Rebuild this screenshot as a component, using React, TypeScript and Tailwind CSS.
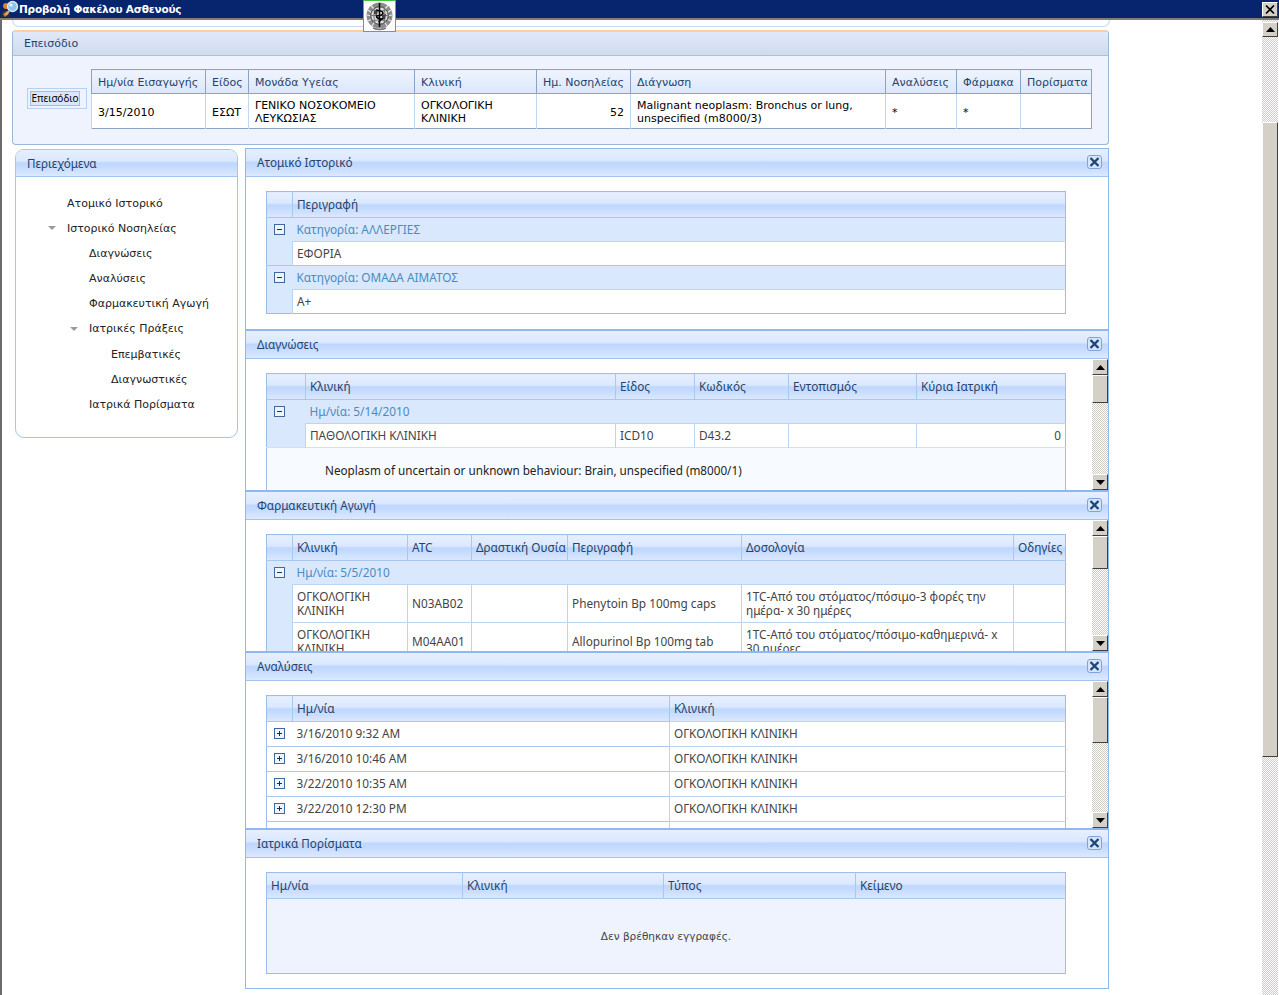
import { FC, ReactNode } from "react";

const HEADER_BG =
  "bg-[linear-gradient(#e6efff_0%,#dbe8fe_42%,#bfd7ff_50%,#c6dbff_66%,#dce9ff_100%)]";
const CHECKER =
  "bg-[repeating-conic-gradient(#cfccc5_0_25%,#ffffff_0_50%)] bg-[length:2px_2px]";
const BTN =
  "bg-[#d4d0c8] border border-t-white border-l-white border-r-[#404040] border-b-[#404040]";
const TH =
  "font-normal text-left align-middle px-1 pb-[2px] whitespace-nowrap text-[#24436b] border-l border-[#a9c8f0] first:border-l-0 " +
  HEADER_BG;
const TD = "align-middle px-1 pb-[2px] border-t border-l border-[#bcd4f2] bg-white";

const Arrow: FC<{ down?: boolean }> = ({ down }) => (
  <svg width="9" height="5" viewBox="0 0 9 5" className={down ? "rotate-180" : ""}>
    <path d="M4.5 0 L9 5 H0 Z" fill="#000" />
  </svg>
);

const Scrollbar: FC<{ thumb: string }> = ({ thumb }) => (
  <div className={`w-[16px] h-full flex flex-col shrink-0 ${CHECKER}`}>
    <div className={`${BTN} h-[16px] flex items-center justify-center shrink-0`}>
      <Arrow />
    </div>
    <div className={`${BTN} ${thumb} shrink-0`} />
    <div className="flex-1" />
    <div className={`${BTN} h-[16px] flex items-center justify-center shrink-0`}>
      <Arrow down />
    </div>
  </div>
);

const CloseIcon: FC = () => (
  <div className="w-[15px] h-[14px] -mt-px rounded-[3px] border border-[#7fa2dc] bg-[#d6e5fc] flex items-center justify-center">
    <svg width="11" height="10" viewBox="0 0 11 10">
      <path d="M1.5 1 L9.5 9 M9.5 1 L1.5 9" stroke="#1d4677" strokeWidth="2.4" />
    </svg>
  </div>
);

const Expander: FC<{ open?: boolean }> = ({ open }) => (
  <div className="w-[11px] h-[11px] ml-[7px] -mt-px border border-[#41689c] bg-[#eef4fe] flex items-center justify-center relative">
    <div className="w-[5px] h-px bg-[#1c2f4a]" />
    {!open && <div className="absolute w-px h-[5px] bg-[#1c2f4a]" />}
  </div>
);

const Panel: FC<{
  title: string;
  height: string;
  top?: string;
  thumb?: string;
  children: ReactNode;
}> = ({ title, height, top = "border-t-2", thumb, children }) => (
  <section className={`${height} ${top} border-x border-[#8fb8ef] bg-white flex flex-col overflow-hidden shrink-0`}>
    <div className={`h-[28px] shrink-0 border-b border-[#a3c2ee] flex items-center justify-between pl-[11px] pr-[6px] text-[11.7px] text-[#24436b] ${HEADER_BG}`}>
      <span>{title}</span>
      <CloseIcon />
    </div>
    <div className="flex-1 flex min-h-0">
      <div className="flex-1 min-w-0 overflow-hidden pl-[20px] pt-[14px]">{children}</div>
      {thumb && <Scrollbar thumb={thumb} />}
    </div>
  </section>
);

const Grid: FC<{ cols: [string, string][]; children: ReactNode }> = ({ cols, children }) => (
  <table className="w-[799px] table-fixed border-collapse border border-[#9dbdea] text-[11.8px] leading-[14px] text-[#444]">
    <colgroup>
      {cols.map(([, w], i) => (
        <col key={i} className={w} />
      ))}
    </colgroup>
    <thead>
      <tr className="h-[26px]">
        {cols.map(([label], i) => (
          <th key={i} className={TH}>
            {label}
          </th>
        ))}
      </tr>
    </thead>
    <tbody>{children}</tbody>
  </table>
);

const GroupRow: FC<{ label: string; span: number }> = ({ label, span }) => (
  <tr className="h-[24px] bg-[#dae8fd]">
    <td className="border-t border-[#a9c8f0]">
      <Expander open />
    </td>
    <td colSpan={span} className="border-t border-[#a9c8f0] px-1 pb-[2px] text-[#4a8bbf]">
      {label}
    </td>
  </tr>
);

const Spacer: FC = () => <td className="bg-[#dae8fd]" />;

const navItems: [string, string, boolean][] = [
  ["Ατομικό Ιστορικό", "pl-[51px]", false],
  ["Ιστορικό Νοσηλείας", "pl-[51px]", true],
  ["Διαγνώσεις", "pl-[73px]", false],
  ["Αναλύσεις", "pl-[73px]", false],
  ["Φαρμακευτική Αγωγή", "pl-[73px]", false],
  ["Ιατρικές Πράξεις", "pl-[73px]", true],
  ["Επεμβατικές", "pl-[95px]", false],
  ["Διαγνωστικές", "pl-[95px]", false],
  ["Ιατρικά Πορίσματα", "pl-[73px]", false],
];

const episodeCols: [string, string][] = [
  ["Ημ/νία Εισαγωγής", "w-[114px]"],
  ["Είδος", "w-[43px]"],
  ["Μονάδα Υγείας", "w-[166px]"],
  ["Κλινική", "w-[122px]"],
  ["Ημ. Νοσηλείας", "w-[94px]"],
  ["Διάγνωση", "w-[255px]"],
  ["Αναλύσεις", "w-[71px]"],
  ["Φάρμακα", "w-[64px]"],
  ["Πορίσματα", "w-[71px]"],
];

const analyses = [
  "3/16/2010 9:32 AM",
  "3/16/2010 10:46 AM",
  "3/22/2010 10:35 AM",
  "3/22/2010 12:30 PM",
];

const WhoLogo: FC = () => (
  <svg width="29" height="29" viewBox="0 0 29 29">
    <circle cx="14.5" cy="13.5" r="13" fill="#8c8c8c" />
    <path d="M3 8 L7 11 M2 13 L6.5 14 M3 19 L7 17 M7 24 L9.5 20 M26 8 L22 11 M27 13 L22.5 14 M26 19 L22 17 M22 24 L19.5 20 M6 3.5 L9 7 M23 3.5 L20 7" stroke="#e8e8e8" strokeWidth="1.2" />
    <circle cx="14.5" cy="13.5" r="8.8" fill="#dcdcdc" stroke="#444" />
    <path d="M5.7 13.5 H23.3 M8 8 Q14.5 11 21 8 M8 19 Q14.5 16 21 19 M10 5.5 Q7.5 13.5 10 21.5 M19 5.5 Q21.5 13.5 19 21.5" stroke="#777" fill="none" />
    <path d="M9 9 L13 8 L12 13 L9 12 Z M17 13 L21 12 L20 17 L17 18 Z" fill="#444" />
    <path d="M14.5 1 V25" stroke="#000" strokeWidth="1.5" />
    <path d="M11 8 Q18 9 18 11 Q18 13.5 11.5 14 Q11 16.5 17 17 L13.5 20" stroke="#000" strokeWidth="1.6" fill="none" />
    <path d="M8 26 Q14.5 29 21 26" stroke="#777" fill="none" strokeWidth="1.5" />
  </svg>
);

const AppIcon: FC = () => (
  <svg width="18" height="18" viewBox="0 0 18 18" className="shrink-0">
    <circle cx="5" cy="6" r="3" fill="#d9822b" />
    <path d="M0 17 Q0 10 5 10 Q9 10 9 17 Z" fill="#2c2c3a" />
    <path d="M2 14 L6 11 L8 13 L4 17 Z" fill="#e0782a" />
    <path d="M8 11 L5 15" stroke="#c9b98f" strokeWidth="2" />
    <circle cx="11.5" cy="6.5" r="5" fill="#8cc4ee" stroke="#dfe6ee" strokeWidth="1.4" />
    <circle cx="10" cy="5" r="1.6" fill="#e8f5ff" />
  </svg>
);

const App: FC = () => {
  return (
    <main className="relative w-[1279px] h-[995px] overflow-hidden bg-white font-['Noto_Sans',sans-serif]">
      <header className="h-[20px] bg-[#07246f] border-b-2 border-[#7f7d78] flex items-center justify-between pr-[1px] pl-[1px]">
        <div className="flex items-center">
          <AppIcon />
          <span className="pt-px font-['DejaVu_Sans',sans-serif] font-bold text-[10.5px] tracking-[-0.2px] text-white">
            Προβολή Φακέλου Ασθενούς
          </span>
        </div>
        <div className={`${BTN} w-[16px] h-[15px] flex items-center justify-center`}>
          <svg width="10" height="9" viewBox="0 0 10 9">
            <path d="M1 0.5 L9 8.5 M9 0.5 L1 8.5" stroke="#000" strokeWidth="1.6" />
          </svg>
        </div>
      </header>

      <div className="absolute left-[363px] top-0 w-[33px] h-[32px] bg-white border border-[#3fc23f] flex items-center justify-center">
        <WhoLogo />
      </div>

      <div className="flex h-[975px]">
        <div className="w-[1262px] border-l-2 border-[#6b6b6b] pl-[10px] overflow-hidden">
          <div className="w-[1098px] h-[7px] border-x border-b border-[#c5d9f5] rounded-b-[8px] mb-[3px]" />

          <section className="w-[1097px] h-[115px] rounded-[4px] border border-t-0 border-[#9db5d6] bg-[#eef3fd] flex flex-col overflow-hidden">
            <div className="h-[2px] bg-[#fdd09b] shrink-0" />
            <div className="h-[24px] shrink-0 pl-[11px] pt-px flex items-center bg-[linear-gradient(#e0e9f9,#cfdbee)] border-b border-[#a9c0dd] font-['DejaVu_Sans',sans-serif] text-[11px] text-[#24436b]">
              Επεισόδιο
            </div>
            <div className="flex items-start pl-[14px] pt-[13px] font-['DejaVu_Sans',sans-serif] text-[11px]">
              <div className="w-[60px] h-[21px] mt-[19px] mr-[4px] border border-[#b4d0f5] p-[2px]">
                <div className="h-full w-[50px] bg-[#d9e7fc] border border-[#9dbdea] flex items-center justify-center font-['Noto_Sans',sans-serif] text-[10px] text-black">
                  Επεισόδιο
                </div>
              </div>
              <table className="w-[1001px] table-fixed border-collapse border border-[#8ba3c4] leading-[13px]">
                <colgroup>
                  {episodeCols.map(([, w], i) => (
                    <col key={i} className={w} />
                  ))}
                </colgroup>
                <thead>
                  <tr className="h-[24px]">
                    {episodeCols.map(([label], i) => (
                      <th
                        key={i}
                        className="font-normal text-left px-[6px] pt-[2px] whitespace-nowrap text-[#24436b] border-l border-b border-[#8ba3c4] bg-[linear-gradient(#eff4fd,#dbe7fb)] first:border-l-0"
                      >
                        {label}
                      </th>
                    ))}
                  </tr>
                </thead>
                <tbody className="bg-white text-black">
                  <tr className="h-[35px] [&>td]:border-l [&>td]:border-[#c2d8f0] [&>td]:px-[6px] [&>td]:pt-[2px] [&>td]:align-middle">
                    <td>3/15/2010</td>
                    <td>ΕΣΩΤ</td>
                    <td>ΓΕΝΙΚΟ ΝΟΣΟΚΟΜΕΙΟ ΛΕΥΚΩΣΙΑΣ</td>
                    <td>ΟΓΚΟΛΟΓΙΚΗ ΚΛΙΝΙΚΗ</td>
                    <td className="text-right">52</td>
                    <td>Malignant neoplasm: Bronchus or lung, unspecified (m8000/3)</td>
                    <td>*</td>
                    <td>*</td>
                    <td />
                  </tr>
                </tbody>
              </table>
            </div>
          </section>

          <div className="flex items-start gap-[7px] mt-[3px]">
            <aside className="w-[223px] h-[289px] ml-[3px] mt-px shrink-0 border border-[#a5c4f0] rounded-[9px] overflow-hidden">
              <div className={`h-[27px] border-b border-[#a3c2ee] pl-[11px] pt-px flex items-center text-[11.7px] text-[#24436b] ${HEADER_BG}`}>
                Περιεχόμενα
              </div>
              <ul className="pt-[14.7px] font-['DejaVu_Sans',sans-serif] text-[11px] text-[#222]">
                {navItems.map(([label, indent, open]) => (
                  <li key={label} className={`relative h-[25.1px] flex items-center ${indent}`}>
                    {open && (
                      <span className="relative">
                        <svg width="8" height="4" viewBox="0 0 8 4" className="absolute -left-[19px] -top-[3px]">
                          <path d="M0 0 H8 L4 4 Z" fill="#9a9a9a" />
                        </svg>
                      </span>
                    )}
                    {label}
                  </li>
                ))}
              </ul>
            </aside>

            <div className="w-[864px] flex flex-col">
              <Panel title="Ατομικό Ιστορικό" height="h-[181px]" top="border-t">
                <Grid cols={[["", "w-[26px]"], ["Περιγραφή", "w-[773px]"]]}>
                  <GroupRow label="Κατηγορία: ΑΛΛΕΡΓΙΕΣ" span={1} />
                  <tr className="h-[24px]">
                    <Spacer />
                    <td className={TD}>ΕΦΟΡΙΑ</td>
                  </tr>
                  <GroupRow label="Κατηγορία: ΟΜΑΔΑ ΑΙΜΑΤΟΣ" span={1} />
                  <tr className="h-[24px]">
                    <Spacer />
                    <td className={TD}>A+</td>
                  </tr>
                </Grid>
              </Panel>

              <Panel title="Διαγνώσεις" height="h-[161px]" thumb="h-[28px]">
                <Grid
                  cols={[
                    ["", "w-[39px]"],
                    ["Κλινική", "w-[310px]"],
                    ["Είδος", "w-[79px]"],
                    ["Κωδικός", "w-[94px]"],
                    ["Εντοπισμός", "w-[128px]"],
                    ["Κύρια Ιατρική", "w-[149px]"],
                  ]}
                >
                  <GroupRow label="Ημ/νία: 5/14/2010" span={5} />
                  <tr className="h-[24px]">
                    <Spacer />
                    <td className={TD}>ΠΑΘΟΛΟΓΙΚΗ ΚΛΙΝΙΚΗ</td>
                    <td className={TD}>ICD10</td>
                    <td className={TD}>D43.2</td>
                    <td className={TD} />
                    <td className={`${TD} text-right`}>0</td>
                  </tr>
                  <tr className="h-[45px] bg-[#f7faff]">
                    <td colSpan={6} className="pl-[58px] text-[11.7px] text-[#222] border-t border-[#cfe0f6]">
                      Neoplasm of uncertain or unknown behaviour: Brain, unspecified (m8000/1)
                    </td>
                  </tr>
                </Grid>
              </Panel>

              <Panel title="Φαρμακευτική Αγωγή" height="h-[161px]" thumb="h-[33px]">
                <Grid
                  cols={[
                    ["", "w-[26px]"],
                    ["Κλινική", "w-[115px]"],
                    ["ATC", "w-[64px]"],
                    ["Δραστική Ουσία", "w-[96px]"],
                    ["Περιγραφή", "w-[174px]"],
                    ["Δοσολογία", "w-[272px]"],
                    ["Οδηγίες", "w-[52px]"],
                  ]}
                >
                  <GroupRow label="Ημ/νία: 5/5/2010" span={6} />
                  <tr className="h-[38px]">
                    <Spacer />
                    <td className={TD}>ΟΓΚΟΛΟΓΙΚΗ ΚΛΙΝΙΚΗ</td>
                    <td className={TD}>N03AB02</td>
                    <td className={TD} />
                    <td className={TD}>Phenytoin Bp 100mg caps</td>
                    <td className={TD}>1TC-Από του στόματος/πόσιμο-3 φορές την ημέρα- x 30 ημέρες</td>
                    <td className={TD} />
                  </tr>
                  <tr className="h-[38px]">
                    <Spacer />
                    <td className={TD}>ΟΓΚΟΛΟΓΙΚΗ ΚΛΙΝΙΚΗ</td>
                    <td className={TD}>M04AA01</td>
                    <td className={TD} />
                    <td className={TD}>Allopurinol Bp 100mg tab</td>
                    <td className={TD}>1TC-Από του στόματος/πόσιμο-καθημερινά- x 30 ημέρες</td>
                    <td className={TD} />
                  </tr>
                </Grid>
              </Panel>

              <Panel title="Αναλύσεις" height="h-[177px]" thumb="h-[46px]">
                <Grid cols={[["", "w-[26px]"], ["Ημ/νία", "w-[377px]"], ["Κλινική", "w-[396px]"]]}>
                  {analyses.map((date) => (
                    <tr key={date} className="h-[25px]">
                      <td className="border-t border-[#a9c8f0] bg-white">
                        <Expander />
                      </td>
                      <td className="border-t border-[#a9c8f0] bg-white px-1 pb-[2px]">{date}</td>
                      <td className={TD}>ΟΓΚΟΛΟΓΙΚΗ ΚΛΙΝΙΚΗ</td>
                    </tr>
                  ))}
                  <tr className="h-[25px]">
                    <td className="border-t border-[#a9c8f0] bg-white" />
                    <td className="border-t border-[#a9c8f0] bg-white" />
                    <td className={TD} />
                  </tr>
                </Grid>
              </Panel>

              <Panel title="Ιατρικά Πορίσματα" height="h-[161px] border-b">
                <Grid
                  cols={[
                    ["Ημ/νία", "w-[196px]"],
                    ["Κλινική", "w-[201px]"],
                    ["Τύπος", "w-[192px]"],
                    ["Κείμενο", "w-[210px]"],
                  ]}
                >
                  <tr className="h-[75px] bg-[#eef3fd]">
                    <td
                      colSpan={4}
                      className="border-t border-[#a9c8f0] text-center font-['DejaVu_Sans',sans-serif] text-[10.5px] text-[#444]"
                    >
                      Δεν βρέθηκαν εγγραφές.
                    </td>
                  </tr>
                </Grid>
              </Panel>
            </div>
          </div>
        </div>

        <div className={`w-[16px] flex flex-col pt-[2px] ${CHECKER}`}>
          <div className={`${BTN} h-[15px] shrink-0 flex items-center justify-center`}>
            <Arrow />
          </div>
          <div className="h-[85px] shrink-0" />
          <div className={`${BTN} h-[635px] shrink-0`} />
        </div>
      </div>
    </main>
  );
};

export default App;
